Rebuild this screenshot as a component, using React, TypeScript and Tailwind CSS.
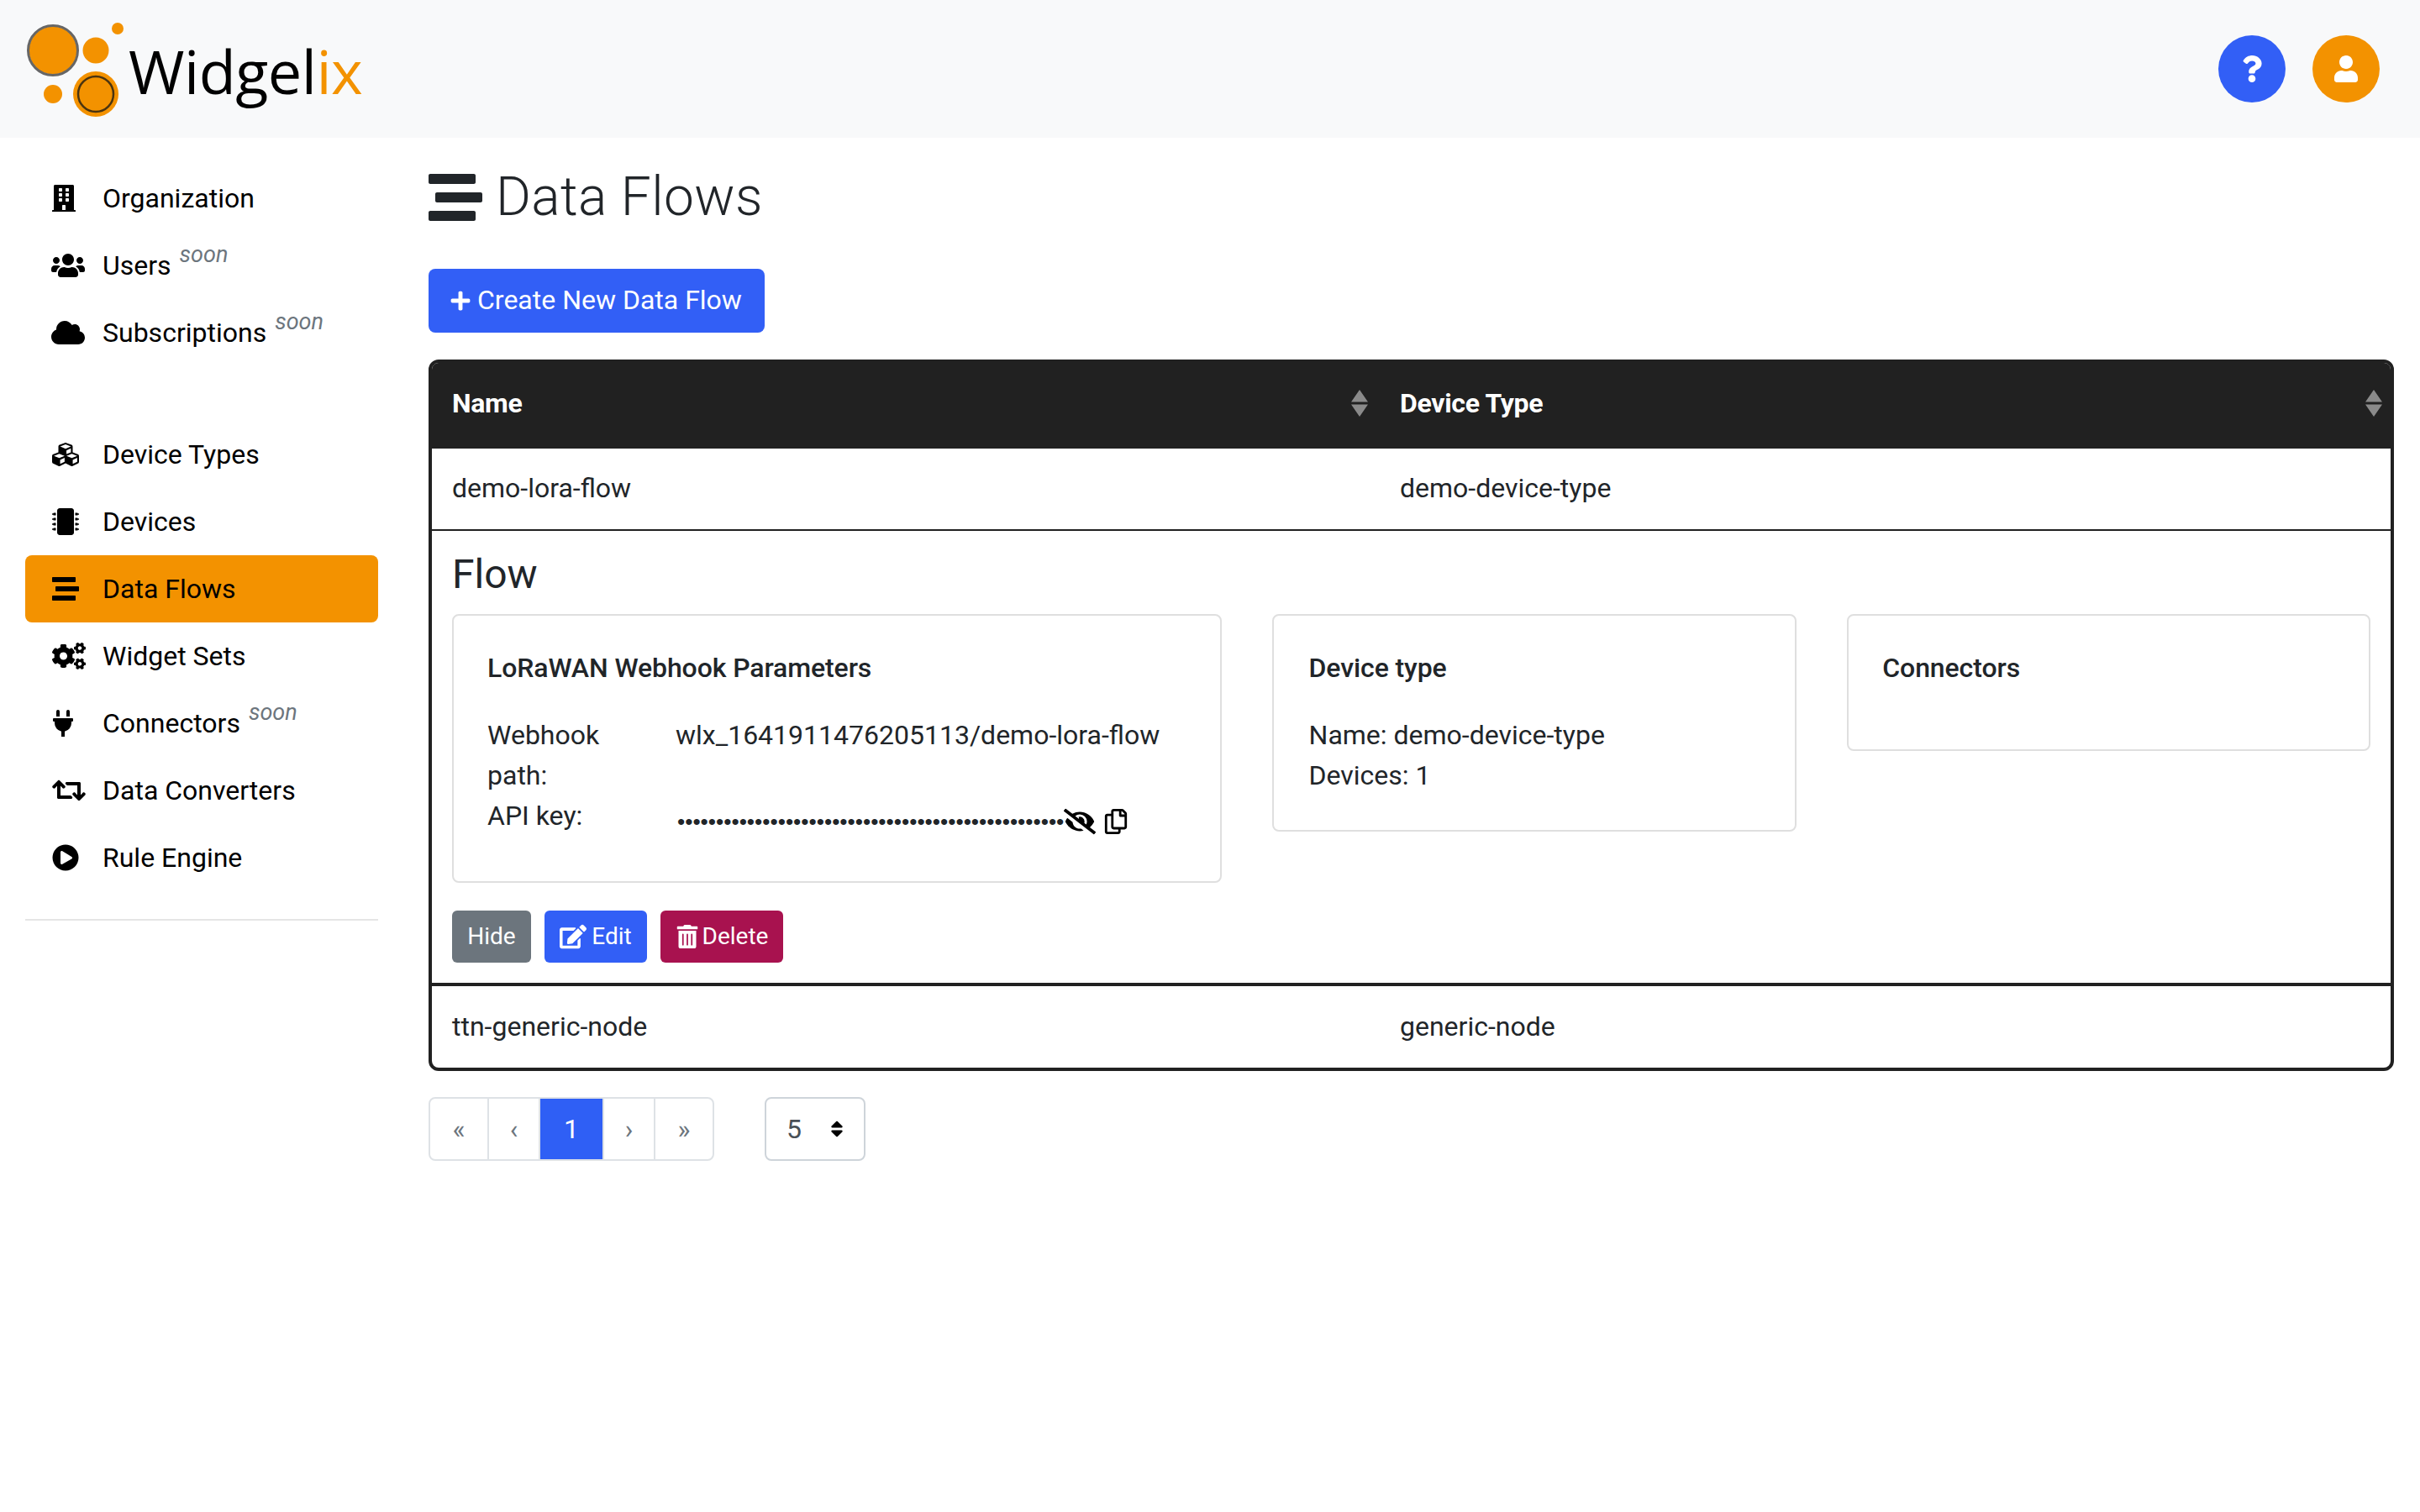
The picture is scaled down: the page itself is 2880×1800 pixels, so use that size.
import React from "react";
import { FaBuilding, FaUsers, FaCloud, FaCubes, FaMicrochip, FaStream, FaCogs, FaPlug, FaRetweet, FaPlayCircle, FaPlus, FaEdit, FaTrashAlt, FaEyeSlash, FaRegCopy, FaQuestion, FaUser, FaSort } from "react-icons/fa";

function Logo() {
  return (
    <div className="relative w-[440px] h-[163px]">
      <svg width="150" height="163" viewBox="0 0 150 163" className="absolute left-0 top-0">
        <circle cx="63" cy="59" r="29" fill="#f39200" stroke="#fff" strokeWidth="1" />
        <circle cx="63" cy="59" r="29.5" fill="none" stroke="#666" strokeWidth="3" />
        <circle cx="114" cy="59" r="15.5" fill="#f39200" />
        <circle cx="140" cy="33" r="7" fill="#f39200" />
        <circle cx="63" cy="111" r="11" fill="#f39200" />
        <circle cx="114" cy="111" r="27" fill="#f39200" />
        <circle cx="114" cy="111" r="21" fill="#f39200" stroke="#4a3410" strokeWidth="2.5" />
      </svg>
      <div className="absolute left-[153px] top-[34px] font-['Open_Sans',sans-serif] font-medium text-[72px] leading-[98px] tracking-[-0.5px] text-black">
        Widgel<span className="text-[#f39200]">ix</span>
      </div>
    </div>
  );
}

function SortArrows({ className }: { className: string }) {
  return (
    <svg width="20" height="32" viewBox="0 0 20 32" className={`absolute top-[8px] ${className}`}>
      <path d="M10 0 L20 14.5 H0 Z M0 17.5 H20 L10 32 Z" fill="#8a8a8a" />
    </svg>
  );
}

function NavItem({ icon, label, soon, active }: { icon: React.ReactNode; label: string; soon?: boolean; active?: boolean }) {
  return (
    <div className={`flex items-center h-[80px] rounded-lg pl-[32px] text-black ${active ? "bg-[#f39200]" : ""}`}>
      <div className="w-[60px] shrink-0 flex items-center">{icon}</div>
      <span className="text-[32px] leading-[48px] -mt-[1px]">{label}</span>
      {soon && <span className="ml-[10px] -mt-[26px] text-[27px] leading-[32px] italic text-[#6c757d]">soon</span>}
    </div>
  );
}

function Card({ title, className, children }: { title: string; className: string; children?: React.ReactNode }) {
  return (
    <div className={`border-2 border-[#dfdfdf] rounded-lg pr-[20px] pt-[38px] ${className}`}>
      <div className="text-[32px] leading-[48px] font-medium text-[#212529] tracking-[-0.1px] mb-[32px]">{title}</div>
      {children}
    </div>
  );
}

function PageItem({ w, label, active, last }: { w: string; label: string; active?: boolean; last?: boolean }) {
  return (
    <div className={`flex items-center justify-center h-full ${w} ${last ? "" : "border-r-2 border-[#dee2e6]"} ${active ? "bg-[#2f5ff5] text-white text-[32px] -my-[2px] h-[76px]" : "text-[#6c757d] text-[32px]"}`}>
      {label}
    </div>
  );
}

export default function App() {
  return (
    <div className="min-h-[1800px] bg-white font-['Roboto',sans-serif] text-[#212529]">
      <header className="h-[164px] bg-[#f8f9fa] flex items-center justify-between pr-[48px]">
        <Logo />
        <div className="flex items-center gap-[32px]">
          <div className="w-[80px] h-[80px] rounded-full bg-[#325ff6] flex items-center justify-center text-white"><FaQuestion size={32} /></div>
          <div className="w-[80px] h-[80px] rounded-full bg-[#f39200] flex items-center justify-center text-white"><FaUser size={32} /></div>
        </div>
      </header>
      <div className="flex">
        <aside className="w-[420px] ml-[30px] shrink-0 pt-[32px]">
          <NavItem icon={<FaBuilding size={32} className="-ml-[2px]" />} label="Organization" />
          <NavItem icon={<FaUsers size={40} className="-ml-[1px]" />} label="Users" soon />
          <NavItem icon={<FaCloud size={40} className="-ml-[1px]" />} label="Subscriptions" soon />
          <div className="h-[65px]" />
          <NavItem icon={<FaCubes size={32} />} label="Device Types" />
          <NavItem icon={<FaMicrochip size={32} />} label="Devices" />
          <NavItem active icon={<FaStream size={32} />} label="Data Flows" />
          <NavItem icon={<FaCogs size={40} />} label="Widget Sets" />
          <NavItem icon={<FaPlug size={32} className="-ml-[3px]" />} label="Connectors" soon />
          <NavItem icon={<FaRetweet size={40} />} label="Data Converters" />
          <NavItem icon={<FaPlayCircle size={32} />} label="Rule Engine" />
          <div className="mt-[33px] border-t-2 border-[#e5e5e5]" />
        </aside>
        <main className="ml-[60px] w-[2339px] shrink-0">
          <div className="flex items-center h-[96px] mt-[23px]">
            <FaStream size={64} className="text-[#212529]" />
            <h1 className="ml-[16px] text-[64px] leading-[76px] font-light tracking-[0.4px] text-[#212529]">Data Flows</h1>
          </div>
          <button className="mt-[37px] flex items-center h-[76px] w-[400px] rounded-lg bg-[#325ff6] text-white text-[32px] pl-[25px] pb-[2px]">
            <FaPlus size={26} className="mr-[7px] mt-[2px]" />Create New Data Flow
          </button>
          <div className="mt-[32px] border-4 border-[#212121] rounded-xl overflow-hidden text-[32px]">
            <div className="grid grid-cols-[1128px_1fr] h-[102px] bg-[#212121] text-white font-bold items-center tracking-[-0.3px]">
              <div className="relative pl-[24px] -mt-[6px]">Name<SortArrows className="right-[14px]" /></div>
              <div className="relative pl-[24px] -mt-[6px]">Device Type<SortArrows className="right-[10px]" /></div>
            </div>
            <div className="grid grid-cols-[1128px_1fr] h-[98px] items-center border-b-2 border-[#212121] pb-[2px]">
              <div className="pl-[24px]">demo-lora-flow</div>
              <div className="pl-[24px]">demo-device-type</div>
            </div>
            <div className="h-[542px] border-b-4 border-[#212121] px-[24px]">
              <div className="text-[48px] leading-[58px] pt-[23px] h-[99px]">Flow</div>
              <div className="flex items-start gap-[60px]">
                <Card title="LoRaWAN Webhook Parameters" className="w-[916px] h-[320px] pl-[40px]">
                  <div className="grid grid-cols-[224px_1fr] leading-[48px]">
                    <div className="w-[160px]">Webhook path:</div>
                    <div>wlx_1641911476205113/demo-lora-flow</div>
                    <div>API key:</div>
                    <div className="flex items-center -ml-[2px] mt-[7px]">
                      <span className="font-['Liberation_Sans',sans-serif] text-[26.3px] leading-[48px] text-[#212529] ml-[4px]">{"•".repeat(50)}</span>
                      <FaEyeSlash size={38} className="text-black" />
                      <FaRegCopy size={30} className="text-black ml-[9px]" />
                    </div>
                  </div>
                </Card>
                <Card title="Device type" className="w-[625px] h-[259px] pl-[42px]">
                  <div className="leading-[48px]">Name: demo-device-type</div>
                  <div className="leading-[48px]">Devices: 1</div>
                </Card>
                <Card title="Connectors" className="w-[623px] h-[163px] pl-[40px]" />
              </div>
              <div className="mt-[33px] flex gap-[16px] text-white text-[28px]">
                <button className="h-[62px] w-[94px] rounded-md bg-[#6c757d]">Hide</button>
                <button className="h-[62px] w-[122px] rounded-md bg-[#325ff6] flex items-center justify-center gap-[6px]"><FaEdit size={32} />Edit</button>
                <button className="h-[62px] w-[146px] rounded-md bg-[#a8124f] flex items-center justify-center gap-[4px]"><FaTrashAlt size={28} />Delete</button>
              </div>
            </div>
            <div className="grid grid-cols-[1128px_1fr] h-[97px] items-center pb-[2px]">
              <div className="pl-[24px]">ttn-generic-node</div>
              <div className="pl-[24px]">generic-node</div>
            </div>
          </div>
          <div className="mt-[31px] flex items-start gap-[60px]">
            <div className="flex items-center w-[340px] h-[76px] border-2 border-[#dee2e6] rounded-lg overflow-visible">
              <PageItem w="w-[70px]" label="«" />
              <PageItem w="w-[61px]" label="‹" />
              <PageItem w="w-[76px]" label="1" active />
              <PageItem w="w-[61px]" label="›" />
              <PageItem w="w-[68px]" label="»" last />
            </div>
            <div className="relative w-[120px] h-[76px] border-2 border-[#ced4da] rounded-lg flex items-center pl-[24px] text-[32px] text-[#495057]">
              5
              <FaSort size={24} className="absolute right-[20px] top-[24px] text-black" />
            </div>
          </div>
        </main>
      </div>
    </div>
  );
}
